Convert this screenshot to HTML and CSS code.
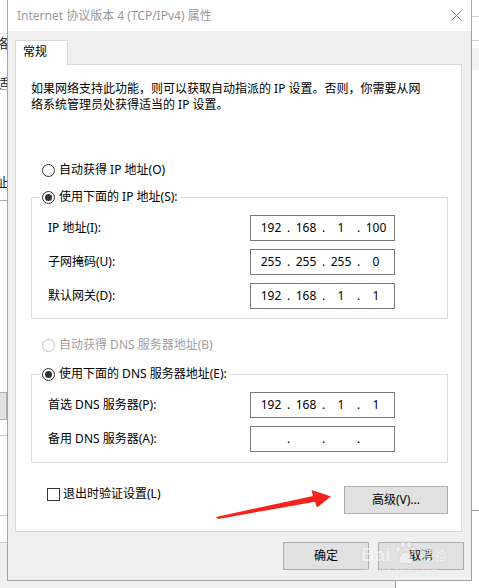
FILE: index.html
```html
<!DOCTYPE html>
<html lang="zh-CN">
<head>
<meta charset="utf-8">
<title>Internet 协议版本 4 (TCP/IPv4) 属性</title>
<link rel="stylesheet" href="styles.css">
</head>
<body>
<div class="desktop" aria-hidden="true">
  <span class="bg-char c1">网络</span>
  <span class="bg-char c2">适</span>
  <span class="bg-char c3">址</span>
  <div class="bg-line h33"></div>
  <div class="bg-line h89"></div>
  <div class="bg-line h200"></div>
  <div class="bg-btn"></div>
  <div class="bg-line h435"></div>
  <div class="bg-line h515"></div>
  <div class="bg-line h542"></div>
  <div class="bg-bottom"></div>
  <div class="bg-rline r16"></div>
  <div class="bg-rline r40"></div>
  <div class="bg-rblock"></div>
  <div class="bg-rline r510"></div>
</div>

<div class="window">
  <div class="titlebar">
    <span class="title">Internet 协议版本 4 (TCP/IPv4) 属性</span>
    <svg class="close" width="11" height="11" viewBox="0 0 11 11"><path d="M0.5 0.5L10.5 10.5M10.5 0.5L0.5 10.5" stroke="#7a7a7a" stroke-width="1" fill="none"/></svg>
  </div>
  <div class="body">
    <div class="tab">常规</div>
    <div class="panel">
      <p class="desc">如果网络支持此功能，则可以获取自动指派的 IP 设置。否则，你需要从网<br>络系统管理员处获得适当的 IP 设置。</p>

      <div class="radio r-first"><span class="dot"></span>自动获得 IP 地址(O)</div>
      <div class="group g-ip">
        <div class="radio legend"><span class="dot on"></span>使用下面的 IP 地址(S):</div>
        <div class="fields">
          <div class="field"><span class="lbl">IP 地址(I):</span><div class="ipbox"><span>192</span><i>.</i><span>168</span><i>.</i><span>1</span><i>.</i><span>100</span></div></div>
          <div class="field"><span class="lbl">子网掩码(U):</span><div class="ipbox"><span>255</span><i>.</i><span>255</span><i>.</i><span>255</span><i>.</i><span>0</span></div></div>
          <div class="field"><span class="lbl">默认网关(D):</span><div class="ipbox"><span>192</span><i>.</i><span>168</span><i>.</i><span>1</span><i>.</i><span>1</span></div></div>
        </div>
      </div>

      <div class="radio r-dns disabled"><span class="dot"></span>自动获得 DNS 服务器地址(B)</div>
      <div class="group g-dns">
        <div class="radio legend"><span class="dot on"></span>使用下面的 DNS 服务器地址(E):</div>
        <div class="fields">
          <div class="field"><span class="lbl">首选 DNS 服务器(P):</span><div class="ipbox"><span>192</span><i>.</i><span>168</span><i>.</i><span>1</span><i>.</i><span>1</span></div></div>
          <div class="field"><span class="lbl">备用 DNS 服务器(A):</span><div class="ipbox"><span></span><i>.</i><span></span><i>.</i><span></span><i>.</i><span></span></div></div>
        </div>
      </div>

      <div class="footer">
        <div class="check"><span class="box"></span>退出时验证设置(L)</div>
        <button class="btn adv">高级(V)...</button>
      </div>
    </div>
    <div class="actions">
      <button class="btn main">确定</button>
      <button class="btn main">取消</button>
    </div>
  </div>
</div>

<svg class="arrow" width="479" height="588" viewBox="0 0 479 588" aria-hidden="true">
  <polygon points="216,517 313,496 311.5,490 331,496.5 317,507.5 315,501.8 218,519" fill="#f5231b"/>
</svg>

<div class="watermark" aria-hidden="true">
  <div class="wm-top">
    <span class="wm-bai">Bai</span>
    <svg class="paw" width="26" height="26" viewBox="0 0 26 26">
      <g fill="rgba(255,255,255,0.7)" stroke="rgba(160,160,160,0.35)" stroke-width="1">
        <ellipse cx="6" cy="9" rx="2.6" ry="3.2"/>
        <ellipse cx="11" cy="4.5" rx="2.6" ry="3.2"/>
        <ellipse cx="17" cy="4.5" rx="2.6" ry="3.2"/>
        <ellipse cx="21.5" cy="10" rx="2.6" ry="3.2"/>
        <path d="M7 21 C7 15 11 12 14 12 C17 12 21 15 21 21 C21 24 17 24 14 23 C11 24 7 24 7 21Z"/>
      </g>
    </svg>
    <span class="wm-jy">经验</span>
  </div>
  <div class="wm-url">jingyan.baidu.com</div>
</div>
</body>
</html>
```

FILE: styles.css
```css
html, body {
  margin: 0;
  padding: 0;
}

body {
  width: 479px;
  height: 588px;
  overflow: hidden;
  position: relative;
  background: #ffffff;
  font-family: "Noto Sans", "Noto Sans CJK SC", sans-serif;
  font-size: 12px;
  color: #000;
}

/* ---------- background desktop (behind the dialog) ---------- */
.desktop {
  position: absolute;
  left: 0;
  top: 0;
  width: 479px;
  height: 588px;
  z-index: 0;
}
.bg-char {
  position: absolute;
  font-size: 13px;
  line-height: 16px;
  color: #1a1a1a;
  white-space: nowrap;
}
.c1 { left: -18px; top: 35px; }
.c2 { left: -4px; top: 75px; }
.c3 { left: -5px; top: 174px; }
.bg-line {
  position: absolute;
  left: 0;
  width: 8px;
  height: 1px;
  background: #c8c8c8;
}
.h33 { top: 33px; background: #dedede; }
.h89 { top: 89px; background: #a8a8a8; }
.h200 { top: 200px; background: #a8a8a8; }
.h435 { top: 435px; background: #c8c8c8; }
.h515 { top: 515px; background: #c8c8c8; }
.h542 { top: 542px; background: #c8c8c8; }
.bg-btn {
  position: absolute;
  left: 0;
  top: 392px;
  width: 7px;
  height: 28px;
  box-sizing: border-box;
  background: #e1e1e1;
  border: 1px solid #adadad;
  border-left: none;
}
.bg-bottom {
  position: absolute;
  left: 0;
  top: 543px;
  width: 395px;
  height: 45px;
  background: #f0f0f0;
  border-right: 1px solid #a0a0a0;
}
.bg-rline {
  position: absolute;
  left: 472px;
  width: 7px;
  height: 1px;
  background: #d0d0d0;
}
.r16 { top: 16px; }
.r40 { top: 40px; }
.r510 { top: 510px; background: #9a9a9a; }
.bg-rblock {
  position: absolute;
  left: 472px;
  top: 48px;
  width: 7px;
  height: 22px;
  background: #f2f2f2;
}

/* ---------- dialog window ---------- */
.window {
  position: relative;
  z-index: 1;
  margin-left: 7px;
  width: 465px;
  height: 581px;
  box-sizing: border-box;
  border: 1px solid #a3a3a3;
  border-top: none;
  background: #f0f0f0;
  display: flex;
  flex-direction: column;
}

.titlebar {
  height: 31px;
  flex: none;
  background: #ffffff;
  display: flex;
  align-items: center;
  justify-content: space-between;
  padding: 0 9px 0 9px;
}
.title {
  color: #999999;
  font-size: 12px;
  line-height: 16px;
  white-space: nowrap;
}
.close {
  display: block;
  margin-top: -1px;
}

.body {
  padding: 9px 9px 0 7px;
}

.tab {
  position: relative;
  z-index: 2;
  width: 53px;
  height: 25px;
  box-sizing: border-box;
  border: 1px solid #d9d9d9;
  border-bottom: none;
  background: #ffffff;
  padding: 3px 0 0 7px;
  line-height: 16px;
  margin-bottom: -1px;
}

.panel {
  width: 447px;
  height: 468px;
  box-sizing: border-box;
  border: 1px solid #d9d9d9;
  background: #ffffff;
  padding: 16px 12px 0 15px;
}

.desc {
  margin: 0;
  line-height: 16px;
  white-space: nowrap;
}

/* radios */
.radio {
  display: flex;
  align-items: center;
  height: 16px;
  line-height: 16px;
  white-space: nowrap;
}
.dot {
  flex: none;
  width: 13px;
  height: 13px;
  box-sizing: border-box;
  border: 1px solid #333333;
  border-radius: 50%;
  margin-right: 4px;
  background: #fff;
  display: flex;
  align-items: center;
  justify-content: center;
}
.dot.on::after {
  content: "";
  width: 7px;
  height: 7px;
  border-radius: 50%;
  background: #333333;
}
.disabled {
  color: #a0a0a0;
}
.disabled .dot {
  border-color: #c4c4c4;
}

.r-first {
  margin-top: 49px;
  margin-left: 11px;
}
.r-dns {
  margin-top: 18px;
  margin-left: 11px;
}

.group {
  width: 417px;
  box-sizing: border-box;
  border: 1px solid #dcdcdc;
}
.g-ip {
  margin-top: 19px;
  padding-bottom: 9px;
}
.g-dns {
  margin-top: 21px;
  padding-bottom: 10px;
}
.legend {
  width: max-content;
  margin: -9px 0 0 8px;
  padding: 0 2px;
  background: #ffffff;
}

.fields {
  margin-top: 10px;
  display: flex;
  flex-direction: column;
  gap: 8px;
}
.field {
  display: flex;
  align-items: center;
  height: 26px;
  padding-left: 16px;
}
.lbl {
  width: 202px;
  flex: none;
  line-height: 16px;
  white-space: nowrap;
}
.ipbox {
  width: 145px;
  height: 26px;
  box-sizing: border-box;
  border: 1px solid #7a7a7a;
  display: flex;
  padding-left: 6px;
  line-height: 24px;
}
.ipbox span {
  width: 28px;
  text-align: center;
}
.ipbox i {
  width: 7px;
  font-style: normal;
  text-align: center;
}

/* footer in panel */
.footer {
  width: 417px;
  margin-top: 23px;
  display: flex;
  align-items: flex-start;
  justify-content: space-between;
}
.check {
  display: flex;
  align-items: center;
  height: 16px;
  line-height: 16px;
  margin-left: 16px;
  white-space: nowrap;
}
.box {
  width: 13px;
  height: 13px;
  box-sizing: border-box;
  border: 1px solid #333333;
  margin-right: 3px;
  background: #fff;
}

.btn {
  font-family: inherit;
  font-size: 12px;
  color: #000;
  background: #e1e1e1;
  border: 1px solid #adadad;
  border-radius: 0;
  padding: 0;
  height: 28px;
  box-sizing: border-box;
  line-height: 16px;
}
.adv {
  width: 104px;
}

.actions {
  margin-top: 10px;
  margin-right: -2px;
  display: flex;
  justify-content: flex-end;
  gap: 9px;
}
.main {
  width: 86px;
}

/* ---------- annotation overlay ---------- */
.arrow {
  position: absolute;
  left: 0;
  top: 0;
  z-index: 5;
  pointer-events: none;
}

.watermark {
  position: absolute;
  left: 361px;
  top: 543px;
  z-index: 6;
  pointer-events: none;
  opacity: 0.7;
  color: rgba(255, 255, 255, 0.85);
  text-shadow: 0 0 1px rgba(150, 150, 150, 0.4);
}
.wm-top {
  display: flex;
  align-items: center;
  height: 24px;
}
.wm-bai {
  font-family: "Liberation Sans", sans-serif;
  font-weight: bold;
  font-size: 19px;
  line-height: 24px;
}
.paw {
  margin: -4px 3px 0 1px;
}
.wm-jy {
  font-size: 13px;
  line-height: 16px;
  font-weight: bold;
}
.wm-url {
  font-family: "Liberation Sans", sans-serif;
  font-size: 9px;
  line-height: 10px;
  margin-top: -1px;
  letter-spacing: 0.3px;
  color: rgba(255, 255, 255, 0.8);
}
```
